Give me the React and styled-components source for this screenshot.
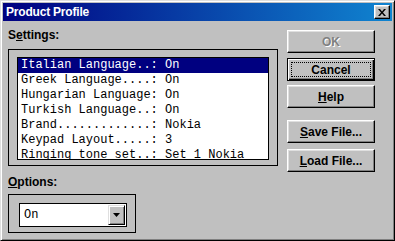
import React from "react";
import styled, { createGlobalStyle } from "styled-components";

const Global = createGlobalStyle`
  html, body { margin: 0; padding: 0; background: #c0c0c0; }
  body { font-family: "Liberation Sans", Arial, sans-serif; }
`;

const Window = styled.div`
  width: 395px;
  height: 241px;
  box-sizing: border-box;
  background: #c0c0c0;
  border: 1px solid;
  border-color: #dfdfdf #000 #000 #dfdfdf;
  box-shadow: inset 1px 1px #fff, inset -1px -1px #808080;
  padding: 2px;
  display: flex;
  flex-direction: column;
  overflow: hidden;
`;

const TitleBar = styled.div`
  height: 18px;
  flex: none;
  display: flex;
  align-items: center;
  justify-content: space-between;
  padding: 0 2px 0 3px;
  background: linear-gradient(to right, #000080, #1084d0);
`;

const Title = styled.span`
  color: #fff;
  font: bold 12px "Liberation Sans", Arial, sans-serif;
  letter-spacing: -0.2px;
`;

const CloseButton = styled.div`
  width: 16px;
  height: 14px;
  box-sizing: border-box;
  background: #c0c0c0;
  border: 1px solid;
  border-color: #fff #000 #000 #fff;
  box-shadow: inset -1px -1px #808080, inset 1px 1px #dfdfdf;
  display: flex;
  align-items: center;
  justify-content: center;
`;

const Body = styled.div`
  flex: 1;
  display: flex;
  padding-left: 5px;
`;

const LeftColumn = styled.div`
  width: 270px;
  display: flex;
  flex-direction: column;
`;

const Label = styled.div`
  height: 14px;
  line-height: 14px;
  margin-top: ${(p) => p.$top}px;
  font: bold 12px "Liberation Sans", Arial, sans-serif;
  color: #000;
`;

const Group = styled.div`
  box-sizing: border-box;
  width: ${(p) => p.$w}px;
  height: ${(p) => p.$h}px;
  margin-top: ${(p) => p.$top}px;
  border: 1px solid #000;
  padding: ${(p) => p.$pad};
`;

const ListBox = styled.div`
  box-sizing: border-box;
  width: 252px;
  height: 103px;
  border: 1px solid #000;
  background: #fff;
  overflow: hidden;
`;

const Row = styled.div`
  height: 15px;
  line-height: 15px;
  padding-left: 3px;
  white-space: pre;
  font: 12px/15px "Liberation Mono", "Courier New", monospace;
  background: ${(p) => (p.$sel ? "#000080" : "#fff")};
  color: ${(p) => (p.$sel ? "#fff" : "#000")};
`;

const Combo = styled.div`
  box-sizing: border-box;
  width: 108px;
  height: 24px;
  border: 1px solid #000;
  background: #fff;
  padding: 1px;
  display: flex;
  align-items: center;
  justify-content: space-between;
`;

const ComboText = styled.span`
  padding-left: 3px;
  font: 12px "Liberation Mono", "Courier New", monospace;
  color: #000;
`;

const DropButton = styled.div`
  box-sizing: border-box;
  width: 17px;
  height: 20px;
  background: #c0c0c0;
  border: 1px solid;
  border-color: #dfdfdf #000 #000 #dfdfdf;
  box-shadow: inset 1px 1px #fff, inset -1px -1px #808080;
  display: flex;
  align-items: center;
  justify-content: center;
`;

const RightColumn = styled.div`
  margin-left: 9px;
  padding-top: 9px;
  display: flex;
  flex-direction: column;
`;

const Button = styled.div`
  position: relative;
  box-sizing: border-box;
  width: 88px;
  height: 23px;
  margin-top: ${(p) => p.$top}px;
  background: #c0c0c0;
  border: 1px solid;
  border-color: ${(p) => (p.$default ? "#000" : "#fff #000 #000 #fff")};
  box-shadow: ${(p) =>
    p.$default
      ? "inset 1px 1px #fff, inset -1px -1px #000, inset -2px -2px #808080"
      : "inset -1px -1px #808080, inset 1px 1px #dfdfdf"};
  display: flex;
  align-items: center;
  justify-content: center;
  font: bold 12px "Liberation Sans", Arial, sans-serif;
  color: ${(p) => (p.$disabled ? "#808080" : "#000")};
  text-shadow: ${(p) => (p.$disabled ? "1px 1px #fff" : "none")};
  ${(p) =>
    p.$default &&
    `&::after{content:"";position:absolute;left:3px;top:3px;right:3px;bottom:3px;border:1px dotted #000;}`}
`;

const rows = [
  "Italian Language..: On",
  "Greek Language....: On",
  "Hungarian Language: On",
  "Turkish Language..: On",
  "Brand.............: Nokia",
  "Keypad Layout.....: 3",
  "Ringing tone set..: Set 1 Nokia",
];

export default function App() {
  return (
    <>
      <Global />
      <Window>
        <TitleBar>
          <Title>Product Profile</Title>
          <CloseButton>
            <svg width="8" height="7" viewBox="0 0 8 7">
              <path d="M0 0h2l2 2.5L6 0h2L5 3.5 8 7H6L4 4.5 2 7H0l3-3.5z" fill="#000" />
            </svg>
          </CloseButton>
        </TitleBar>
        <Body>
          <LeftColumn>
            <Label $top={7}>
              S<u>e</u>ttings:
            </Label>
            <Group $w={270} $h={117} $top={7} $pad="7px 0 0 8px">
              <ListBox>
                {rows.map((r, i) => (
                  <Row key={i} $sel={i === 0}>
                    {r}
                  </Row>
                ))}
              </ListBox>
            </Group>
            <Label $top={9}>
              <u>O</u>ptions:
            </Label>
            <Group $w={128} $h={39} $top={5} $pad="8px 0 0 10px">
              <Combo>
                <ComboText>On</ComboText>
                <DropButton>
                  <svg width="7" height="4" viewBox="0 0 7 4">
                    <path d="M0 0h7L3.5 4z" fill="#000" />
                  </svg>
                </DropButton>
              </Combo>
            </Group>
          </LeftColumn>
          <RightColumn>
            <Button $top={0} $disabled>
              OK
            </Button>
            <Button $top={5} $default>
              Cancel
            </Button>
            <Button $top={4}>
              <u>H</u>elp
            </Button>
            <Button $top={12}>
              <u>S</u>ave File...
            </Button>
            <Button $top={6}>
              <u>L</u>oad File...
            </Button>
          </RightColumn>
        </Body>
      </Window>
    </>
  );
}
